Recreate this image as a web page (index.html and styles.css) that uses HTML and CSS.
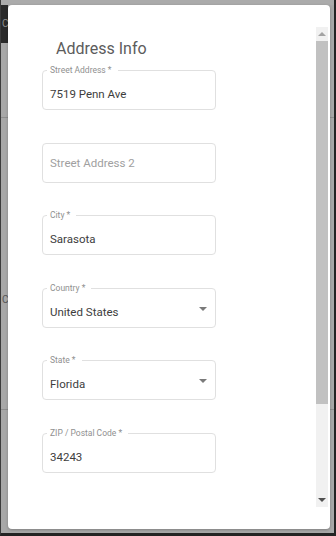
FILE: index.html
```html
<!DOCTYPE html>
<html lang="en">
<head>
<meta charset="utf-8">
<title>Address Info</title>
<link rel="stylesheet" href="styles.css">
</head>
<body>
<div class="screen">
  <div class="bg">
    <div class="bg-strip"></div>
    <div class="bg-head"><div class="bg-head-block">C</div></div>
    <div class="bg-row bg-row1"></div>
    <div class="bg-row bg-row2"><span class="bg-letter">C</span></div>
    <div class="bg-rest"></div>
  </div>

  <div class="dialog">
    <div class="content">
      <h2 class="title">Address Info</h2>

      <div class="field">
        <span class="field-label">Street Address *</span>
        <div class="field-value">7519 Penn Ave</div>
      </div>

      <div class="field">
        <div class="field-placeholder">Street Address 2</div>
      </div>

      <div class="field">
        <span class="field-label">City *</span>
        <div class="field-value">Sarasota</div>
      </div>

      <div class="field">
        <span class="field-label">Country *</span>
        <div class="field-value">United States</div>
        <span class="arrow"></span>
      </div>

      <div class="field">
        <span class="field-label">State *</span>
        <div class="field-value">Florida</div>
        <span class="arrow"></span>
      </div>

      <div class="field">
        <span class="field-label">ZIP / Postal Code *</span>
        <div class="field-value">34243</div>
      </div>
    </div>

    <div class="scrollbar">
      <div class="sb-btn"><span class="sb-up"></span></div>
      <div class="sb-thumb"></div>
      <div class="sb-track"></div>
      <div class="sb-btn"><span class="sb-down"></span></div>
    </div>
  </div>
</div>
</body>
</html>
```

FILE: styles.css
```css
html, body {
  margin: 0;
  padding: 0;
}

body {
  width: 336px;
  height: 536px;
  overflow: hidden;
  font-family: Roboto, "Liberation Sans", Arial, sans-serif;
  background: #a8a8a8;
}

.screen {
  position: relative;
  box-sizing: border-box;
  width: 336px;
  height: 536px;
  border-left: 1px solid #3c3c3c;
  border-right: 2px solid #232323;
  border-bottom: 3px solid #232323;
  overflow: hidden;
}

.bg {
  display: flex;
  flex-direction: column;
  height: 100%;
}

.bg-strip {
  height: 5px;
  background: #ababab;
}

.bg-head {
  height: 38px;
  display: flex;
}

.bg-head-block {
  width: 7px;
  background: #2a2a2a;
  color: #8f8f8f;
  font-size: 10px;
  line-height: 38px;
  padding-left: 1px;
  box-sizing: border-box;
  overflow: hidden;
}

.bg-row {
  border-bottom: 1px solid #8e8e8e;
}

.bg-row1 {
  height: 74px;
}

.bg-row2 {
  height: 291px;
}

.bg-letter {
  display: block;
  padding: 176px 0 0 1px;
  font-size: 10px;
  line-height: 12px;
  color: #555;
}

.bg-rest {
  flex: 1;
}

.dialog {
  position: absolute;
  left: 7px;
  top: 5px;
  width: 322px;
  height: 524px;
  box-sizing: border-box;
  padding: 22px 2px 22px 0;
  background: #fff;
  border-radius: 4px;
  box-shadow: 0 1px 3px rgba(0, 0, 0, 0.25);
  display: flex;
}

.content {
  flex: 1;
  overflow: hidden;
  padding-left: 34px;
}

.title {
  margin: 12px 0 11px 14px;
  font-size: 16px;
  line-height: 20px;
  font-weight: 400;
  color: #5c5c5c;
}

.field {
  position: relative;
  box-sizing: border-box;
  width: 174px;
  height: 40px;
  border: 1px solid #e0e0e0;
  border-radius: 4px;
  margin-bottom: 32.5px;
}

.field-label {
  position: absolute;
  left: 4px;
  top: -6px;
  padding: 0 6px 0 3px;
  background: #fff;
  font-size: 8.5px;
  line-height: 11px;
  color: #909090;
  white-space: nowrap;
}

.field-value {
  padding: 16px 7px 0;
  font-size: 11.5px;
  line-height: 14px;
  color: #3d3d3d;
}

.field-placeholder {
  padding: 0 7px;
  font-size: 11.5px;
  line-height: 38px;
  color: #a0a0a0;
}

.arrow {
  position: absolute;
  right: 8px;
  top: 18px;
  width: 0;
  height: 0;
  border-left: 4px solid transparent;
  border-right: 4px solid transparent;
  border-top: 4px solid #7a7a7a;
}

.scrollbar {
  width: 12px;
  display: flex;
  flex-direction: column;
  background: #f1f1f1;
}

.sb-btn {
  height: 14px;
  display: flex;
  align-items: center;
  justify-content: center;
}

.sb-up {
  width: 0;
  height: 0;
  border-left: 4px solid transparent;
  border-right: 4px solid transparent;
  border-bottom: 4px solid #a3a3a3;
}

.sb-down {
  width: 0;
  height: 0;
  border-left: 4px solid transparent;
  border-right: 4px solid transparent;
  border-top: 4px solid #505050;
}

.sb-thumb {
  height: 363px;
  background: #c1c1c1;
}

.sb-track {
  flex: 1;
}
```
